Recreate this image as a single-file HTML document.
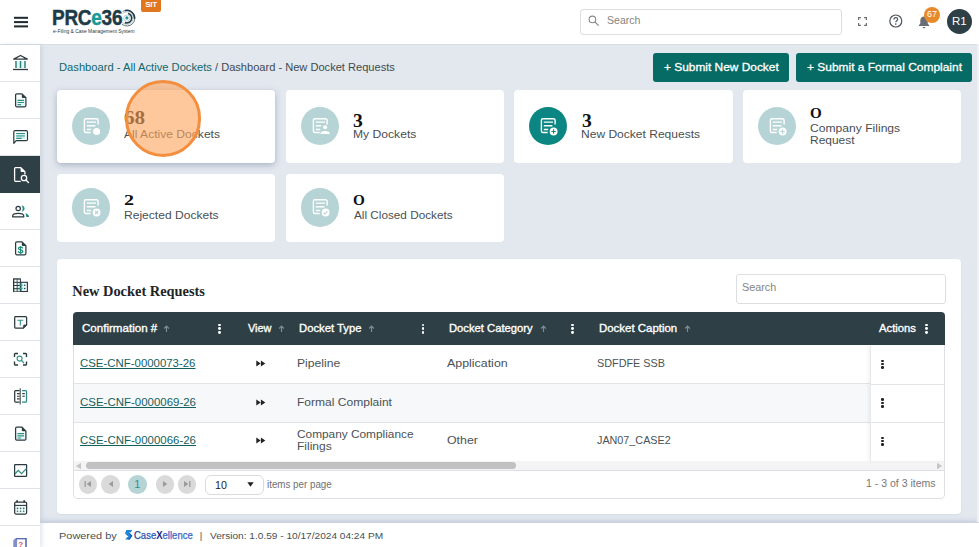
<!DOCTYPE html>
<html>
<head>
<meta charset="utf-8">
<title>PRCe360 - Dashboard - New Docket Requests</title>
<style>
*{box-sizing:border-box;margin:0;padding:0}
html,body{width:979px;height:547px;overflow:hidden;background:#e3e8ef;font-family:"Liberation Sans",sans-serif;color:#4a4f52}
.abs{position:absolute}
.t{position:absolute;white-space:nowrap;line-height:1em;transform-origin:0 50%;display:block}
#header{position:absolute;left:0;top:0;width:979px;height:44.5px;background:#fff;border-bottom:1px solid #d9dde3}
#sidebar{position:absolute;left:0;top:44.5px;width:40px;height:503px;background:#fff;box-shadow:2px 0 4px rgba(150,165,188,.28)}
.sb{position:absolute;left:0;width:40px;height:37px;border-bottom:1px solid #dfe2e6}
.sb.active{background:#2e3f46;border-bottom-color:#2e3f46}
.sb svg{position:absolute;left:10px;top:8px;width:20px;height:20px;overflow:visible}
#sit{position:absolute;left:141px;top:0;width:20px;height:11.5px;background:#e0761e;border-radius:0 0 2px 2px;color:#fff;font-size:8px;font-weight:bold;text-align:center;line-height:10.8px;letter-spacing:-.3px}
#hsearch{position:absolute;left:580px;top:9px;width:262px;height:25.5px;border:1px solid #dcdddf;border-radius:3px;background:#fff}
#badge{position:absolute;left:924px;top:7px;width:16px;height:16px;border-radius:50%;background:#e8892b;color:#fff;font-size:9px;text-align:center;line-height:15.5px}
#avatar{position:absolute;left:946.8px;top:9.1px;width:25px;height:25px;border-radius:50%;background:#2e3f46;color:#fff;font-size:11.5px;text-align:center;line-height:25px}
.btn{position:absolute;top:53px;height:28.5px;background:#066a65;border-radius:3px}
.card{position:absolute;width:218px;background:#fff;border-radius:4px}
.ic{position:absolute;width:38.4px;height:38.4px;border-radius:50%;background:#b6d4d6}
.ic.on{background:#0b8682}
.ic svg{position:absolute;left:9px;top:9px;width:20px;height:20px;overflow:visible}
#panel{position:absolute;left:57px;top:258.5px;width:904px;height:255.5px;background:#fff;border-radius:4px;box-shadow:0 1px 2px rgba(170,182,200,.25)}
#psearch{position:absolute;left:736px;top:274px;width:209.5px;height:29.5px;border:1px solid #dcdee1;border-radius:3px;background:#fff}
#grid{position:absolute;left:72.5px;top:311.5px;width:872.2px;height:187px;border-radius:4px;overflow:hidden;background:#fff}
#gborder{position:absolute;left:0;top:0;width:872.2px;height:187px;border:1px solid #dcdfe3;border-radius:4px}
#ghead{position:absolute;left:0;top:0;width:873px;height:33.5px;background:#2e3f46}
.row{position:absolute;left:1px;width:870.2px;border-bottom:1px solid #e2e4e7;background:#fff}
.row.alt{background:#f7f8fa}
#actcol{position:absolute;left:796px;top:34px;width:76px;height:115px;background:#fff;border-left:1px solid #e6e8ea;box-shadow:-2px 0 3px rgba(0,0,0,.05)}
.kd{position:absolute;width:2.8px}
.kd i{display:block;width:2.8px;height:2.8px;border-radius:50%;margin-bottom:.9px;background:#fff}
.kd.d i{width:2.4px;height:2.4px;margin-bottom:1.1px}
.kd.d i{background:#222}
.pg{position:absolute;top:164px;width:18.6px;height:18.6px;border-radius:50%;background:#dadada}
.pg svg{position:absolute;left:4.3px;top:4.3px;width:10px;height:10px}
#footer{position:absolute;left:40px;top:522.5px;width:939px;height:25px;background:#fff;box-shadow:0 -2px 5px rgba(150,165,188,.45)}
#hl{position:absolute;left:124.5px;top:80.2px;width:76.5px;height:76.5px;border-radius:50%;background:rgba(253,166,96,.62);border:3.6px solid #f38e3e}
</style>
</head>
<body>
<div id="header">
<svg class="abs" style="left:13px;top:15px" width="16" height="14" viewBox="0 0 16 14"><rect x="1" y="1.8" width="14" height="2" fill="#1f2a30"/><rect x="1" y="6.1" width="14" height="2" fill="#1f2a30"/><rect x="1" y="10.4" width="14" height="2" fill="#1f2a30"/></svg>
<svg class="abs" style="left:118px;top:8px" width="19" height="20" viewBox="0 0 19 20" fill="none"><path d="M4.71 3.40A7.9 7.9 0 1 1 4.04 16.33" stroke="#1c3b47" stroke-width=".7"/><path d="M6.91 2.66A7.7 7.7 0 0 1 16.57 10.77" stroke="#1c3b47" stroke-width="1.5"/><path d="M4.85 5.27A6.3 6.3 0 1 1 4.07 14.15" stroke="#7d9097" stroke-width=".5"/><path d="M10.14 5.46A4.8 4.8 0 1 1 6.87 14.45" stroke="#1c3b47" stroke-width="1.5"/><circle cx="8.900000000000006" cy="10.100000000000001" r="3.1" stroke="#8aa0a5" stroke-width=".5"/><circle cx="8.900000000000006" cy="9.900000000000002" r="1.6" fill="#1b9a94"/></svg>
<div id="sit">SIT</div>
<div id="hsearch"><svg class="abs" style="left:7px;top:4.8px" width="12" height="12" viewBox="0 0 12 12"><circle cx="4.4" cy="4.4" r="3.3" fill="none" stroke="#8a8a8a" stroke-width="1.1"/><path d="M6.9 6.9 L10.6 10.6" stroke="#8a8a8a" stroke-width="1.3"/></svg></div>
<svg class="abs" style="left:857px;top:16px" width="11" height="11" viewBox="0 0 11 11" fill="none" stroke="#6b7077" stroke-width="1.2"><path d="M1.600 3.900V1.600h2.300M7.100 1.600H9.400v2.300M9.400 7.100V9.400H7.100M3.900 9.400H1.600V7.100"/></svg>
<svg class="abs" style="left:888px;top:13px" width="16" height="16" viewBox="0 0 16 16"><circle cx="7.8" cy="8" r="6" fill="none" stroke="#4d535c" stroke-width="1.2"/><path d="M5.900 6.500c0-1.200.85-1.950 1.900-1.950s1.900.75 1.900 1.800c0 1.300-1.900 1.450-1.900 2.900" fill="none" stroke="#4d535c" stroke-width="1.200"/><circle cx="7.800" cy="11.100" r=".8" fill="#4d535c"/></svg>
<svg class="abs" style="left:918px;top:16px" width="12" height="13" viewBox="0 0 12 13"><path d="M6 .5c-2.300 0-3.700 1.800-3.700 4v3L.900 9.300v.700h10.200v-.700L9.700 7.500v-3c0-2.200-1.400-4-3.700-4z" fill="#696d75"/><path d="M4.700 10.900h2.600c0 .7-.6 1.300-1.300 1.300s-1.300-.6-1.300-1.300z" fill="#696d75"/></svg>
<div id="badge">67</div>
<div id="avatar">R1</div>
</div>

<div class="btn" style="left:653px;width:136px"></div>
<div class="btn" style="left:796px;width:176px"></div>
<div class="card" style="left:57px;top:90px;height:73px;width:218px;box-shadow:0 2px 6px rgba(110,125,150,.5)"><div class="ic" style="left:14.500px;top:17px;color:#b6d4d6"><svg viewBox="0 0 20 20"><path d="M17.100 8.600V4.300a1.500 1.500 0 0 0-1.500-1.500H4.900a1.500 1.500 0 0 0-1.500 1.500v10.700a1.500 1.500 0 0 0 1.500 1.500h4.800" fill="none" stroke="#fff" stroke-width="1.400" stroke-linecap="butt"/><path d="M5.800 6.100h9.200M5.800 9.800h8.600M5.800 13.500h4.400" stroke="#fff" stroke-width="1.400"/><circle cx="15.6" cy="15.5" r="3.500" fill="#fff"/></svg></div></div>
<div class="card" style="left:286px;top:90px;height:73px;width:218px"><div class="ic" style="left:14.500px;top:17px;color:#b6d4d6"><svg viewBox="0 0 20 20"><path d="M17.100 8.600V4.300a1.500 1.500 0 0 0-1.500-1.500H4.900a1.500 1.500 0 0 0-1.500 1.500v10.700a1.500 1.500 0 0 0 1.500 1.500h4.800" fill="none" stroke="#fff" stroke-width="1.400" stroke-linecap="butt"/><path d="M5.800 6.100h9.200M5.800 9.800h5.400M5.800 13.500h4.400" stroke="#fff" stroke-width="1.400"/><circle cx="15.100" cy="11.300" r="2" fill="#fff"/><path d="M10.500 17.900v-.500c0-1.600 2-2.400 4.600-2.400s4.600.8 4.600 2.400v.500z" fill="#fff"/></svg></div></div>
<div class="card" style="left:514.3px;top:90px;height:73px;width:218.6px"><div class="ic on" style="left:14.500px;top:17px;color:#0b8682"><svg viewBox="0 0 20 20"><path d="M17.100 8.600V4.300a1.500 1.500 0 0 0-1.500-1.500H4.900a1.500 1.500 0 0 0-1.500 1.500v10.700a1.500 1.500 0 0 0 1.500 1.500h4.800" fill="none" stroke="#fff" stroke-width="1.400" stroke-linecap="butt"/><path d="M5.800 6.100h9.200M5.800 9.800h8.600M5.800 13.500h4.400" stroke="#fff" stroke-width="1.400"/><circle cx="15.6" cy="15.5" r="3.900" fill="#fff"/><path d="M15.6 13.3v4.400M13.399999999999999 15.5h4.400" stroke="currentColor" stroke-width="1.100"/></svg></div></div>
<div class="card" style="left:743px;top:90px;height:73px;width:218px"><div class="ic" style="left:14.500px;top:17px;color:#b6d4d6"><svg viewBox="0 0 20 20"><path d="M17.100 8.600V4.300a1.500 1.500 0 0 0-1.500-1.500H4.900a1.500 1.500 0 0 0-1.500 1.500v10.700a1.500 1.500 0 0 0 1.500 1.500h4.800" fill="none" stroke="#fff" stroke-width="1.400" stroke-linecap="butt"/><path d="M5.800 6.100h9.200M5.800 9.800h8.600M5.800 13.500h4.400" stroke="#fff" stroke-width="1.400"/><circle cx="15.6" cy="15.5" r="3.900" fill="#fff"/><path d="M15.6 13.3v4.400M13.399999999999999 15.5h4.400" stroke="currentColor" stroke-width="1.100"/></svg></div></div>
<div class="card" style="left:57px;top:174.2px;height:67.6px;width:218px"><div class="ic" style="left:14.500px;top:14.1px;color:#b6d4d6"><svg viewBox="0 0 20 20"><path d="M17.100 8.600V4.300a1.500 1.500 0 0 0-1.500-1.500H4.900a1.500 1.500 0 0 0-1.500 1.500v10.700a1.500 1.500 0 0 0 1.500 1.500h4.800" fill="none" stroke="#fff" stroke-width="1.400" stroke-linecap="butt"/><path d="M5.800 6.100h9.200M5.800 9.800h8.600M5.800 13.500h4.400" stroke="#fff" stroke-width="1.400"/><circle cx="15.6" cy="15.5" r="3.900" fill="#fff"/><path d="M14.1 14.0l3 3M17.1 14.0l-3 3" stroke="currentColor" stroke-width="1.100"/></svg></div></div>
<div class="card" style="left:286px;top:174.2px;height:67.6px;width:218px"><div class="ic" style="left:14.500px;top:14.1px;color:#b6d4d6"><svg viewBox="0 0 20 20"><path d="M17.100 8.600V4.300a1.500 1.500 0 0 0-1.500-1.500H4.900a1.500 1.500 0 0 0-1.500 1.500v10.700a1.500 1.500 0 0 0 1.500 1.500h4.800" fill="none" stroke="#fff" stroke-width="1.400" stroke-linecap="butt"/><path d="M5.800 6.100h9.200M5.800 9.800h8.600M5.800 13.500h4.400" stroke="#fff" stroke-width="1.400"/><circle cx="15.6" cy="15.5" r="3.900" fill="#fff"/><path d="M13.7 15.6l1.300 1.300 2.500-2.600" stroke="currentColor" stroke-width="1.100" fill="none"/></svg></div></div>
<div id="panel"></div>
<div id="psearch"></div>
<div id="grid">
<div class="row" style="top:33.5px;height:38.8px"></div>
<div class="row alt" style="top:72.3px;height:38.8px"></div>
<div class="row" style="top:111.1px;height:37.9px;border-bottom:0"></div>
<div class="abs" style="left:1px;top:149.0px;width:870.2px;height:9.5px;background:#f4f4f4"></div>
<div class="abs" style="left:13.0px;top:150.5px;width:430px;height:6.5px;border-radius:3.5px;background:#c1c1c1"></div>
<svg class="abs" style="left:2.2px;top:150.3px" width="7" height="8" viewBox="0 0 7 8"><path d="M6 .8v6.400L.8 4z" fill="#c6c6c6"/></svg>
<svg class="abs" style="left:863.3px;top:150.3px" width="7" height="8" viewBox="0 0 7 8"><path d="M1 .8v6.400L6.200 4z" fill="#c6c6c6"/></svg>
<div id="actcol" style="left:797.0px;top:34.5px;height:114.5px;width:75.2px"><div class="abs" style="left:0;top:37.5px;width:76px;height:1px;background:#e2e4e7"></div><div class="abs" style="left:0;top:76px;width:76px;height:1px;background:#e2e4e7"></div></div>
<div class="abs" style="left:1px;top:158.0px;width:870.2px;height:1px;background:#dcdfe3"></div>
<div id="gborder"></div><div id="ghead"></div>
</div>
<div class="kd" style="left:218.1px;top:323.6px"><i></i><i></i><i></i></div>
<div class="kd" style="left:421.5px;top:323.6px"><i></i><i></i><i></i></div>
<div class="kd" style="left:571.1px;top:323.6px"><i></i><i></i><i></i></div>
<div class="kd" style="left:925.3000000000001px;top:323.6px"><i></i><i></i><i></i></div>
<div class="kd d" style="left:881.2px;top:359.5px"><i></i><i></i><i></i></div>
<div class="kd d" style="left:881.2px;top:398.3px"><i></i><i></i><i></i></div>
<div class="kd d" style="left:881.2px;top:436.5px"><i></i><i></i><i></i></div>
<svg class="abs" style="left:163.2px;top:325px" width="7" height="8" viewBox="0 0 7 8"><path d="M3.500 7V1.200M1.100 3.500L3.500 1.100 5.900 3.500" fill="none" stroke="#7f8d91" stroke-width="1.200"/></svg>
<svg class="abs" style="left:277.8px;top:325px" width="7" height="8" viewBox="0 0 7 8"><path d="M3.500 7V1.200M1.100 3.500L3.500 1.100 5.900 3.500" fill="none" stroke="#7f8d91" stroke-width="1.200"/></svg>
<svg class="abs" style="left:368.1px;top:325px" width="7" height="8" viewBox="0 0 7 8"><path d="M3.500 7V1.200M1.100 3.500L3.500 1.100 5.900 3.500" fill="none" stroke="#7f8d91" stroke-width="1.200"/></svg>
<svg class="abs" style="left:539.5px;top:325px" width="7" height="8" viewBox="0 0 7 8"><path d="M3.500 7V1.200M1.100 3.500L3.500 1.100 5.900 3.500" fill="none" stroke="#7f8d91" stroke-width="1.200"/></svg>
<svg class="abs" style="left:683.5px;top:325px" width="7" height="8" viewBox="0 0 7 8"><path d="M3.500 7V1.200M1.100 3.500L3.500 1.100 5.900 3.500" fill="none" stroke="#7f8d91" stroke-width="1.200"/></svg>
<svg class="abs" style="left:255.800px;top:360.1px" width="10" height="7" viewBox="0 0 10 7"><path d="M.3.500L4.700 3.500.3 6.500zM4.900.500L9.300 3.500 4.900 6.500z" fill="#222"/></svg>
<svg class="abs" style="left:255.800px;top:398.9px" width="10" height="7" viewBox="0 0 10 7"><path d="M.3.500L4.700 3.500.3 6.500zM4.900.500L9.300 3.500 4.900 6.500z" fill="#222"/></svg>
<svg class="abs" style="left:255.800px;top:437.2px" width="10" height="7" viewBox="0 0 10 7"><path d="M.3.500L4.700 3.500.3 6.500zM4.900.500L9.300 3.500 4.900 6.500z" fill="#222"/></svg>
<div class="pg" style="left:78.9px;top:475.2px;background:#dadada"><svg viewBox="0 0 10 10"><path d="M2.200 2v6" stroke="#9b9b9b" stroke-width="1.300"/><path d="M8 2v6L3.600 5z" fill="#9b9b9b"/></svg></div>
<div class="pg" style="left:101.3px;top:475.2px;background:#dadada"><svg viewBox="0 0 10 10"><path d="M7 2v6L2.800 5z" fill="#9b9b9b"/></svg></div>
<div class="pg" style="left:128.2px;top:475.2px;background:#b6d4d6"><svg viewBox="0 0 10 10"></svg></div>
<div class="pg" style="left:155.79999999999998px;top:475.2px;background:#dadada"><svg viewBox="0 0 10 10"><path d="M3 2v6L7.200 5z" fill="#9b9b9b"/></svg></div>
<div class="pg" style="left:177.89999999999998px;top:475.2px;background:#dadada"><svg viewBox="0 0 10 10"><path d="M7.800 2v6" stroke="#9b9b9b" stroke-width="1.300"/><path d="M2 2v6L6.400 5z" fill="#9b9b9b"/></svg></div>
<div class="abs" style="left:205px;top:475.200px;width:59px;height:19.800px;border:1px solid #d9dbdd;border-radius:6px;background:#fff"></div>
<svg class="abs" style="left:246.500px;top:482.300px" width="7" height="5" viewBox="0 0 7 5"><path d="M.3.300h6.400L3.500 4.700z" fill="#222"/></svg>
<div id="footer"></div>
<div id="sidebar"></div>
<div class="sb" style="top:44.5px"></div>
<div class="sb" style="top:81.5px"></div>
<div class="sb" style="top:118.5px"></div>
<div class="sb active" style="top:155.5px"></div>
<div class="sb" style="top:192.5px"></div>
<div class="sb" style="top:229.5px"></div>
<div class="sb" style="top:266.5px"></div>
<div class="sb" style="top:303.5px"></div>
<div class="sb" style="top:340.5px"></div>
<div class="sb" style="top:377.5px"></div>
<div class="sb" style="top:414.5px"></div>
<div class="sb" style="top:451.5px"></div>
<div class="sb" style="top:488.5px"></div>
<div class="sb" style="top:525.5px"></div>
<svg class="abs" style="left:0;top:0" width="40" height="547" viewBox="0 0 40 547" fill="none"><path d="M13.700 59.100L20.500 55.500l6.800 3.600z" stroke="#2b3a3f" stroke-width="1.300" stroke-linejoin="round"/><path d="M13 69.500h15" stroke="#2b3a3f" stroke-width="1.300"/><rect x="15.400" y="61" width="10.200" height="7" fill="#e6f7f5"/><path d="M16 61v7.100M20.500 61v7.100M25 61v7.100" stroke="#2d857c" stroke-width="1.500"/><rect x="16.300" y="99.2" width="9" height="7.400" fill="#e9f8f6"/><path d="M16.8 93.9h5.200l3.900 3.900v7.800a1.200 1.200 0 0 1-1.200 1.200h-7.900a1.200 1.200 0 0 1-1.200-1.200v-10.500a1.200 1.200 0 0 1 1.200-1.200z" fill="none" stroke="#2b3a3f" stroke-width="1.250" stroke-linejoin="round"/><path d="M21.8 93.9v3a1 1 0 0 0 1 1h3.100z" fill="#2b3a3f"/><path d="M17.500 100.4h6.500M17.500 102.5h6.500M17.500 104.7h3.600" stroke="#2f9288" stroke-width="1.200"/><rect x="16.200" y="132.800" width="8.800" height="6.200" fill="#d3efec"/><path d="M15 130.700h11.300a1.200 1.200 0 0 1 1.200 1.200v7.500a1.200 1.200 0 0 1-1.200 1.200h-10.100l-2.400 2.700v-11.400a1.200 1.200 0 0 1 1.200-1.200z" stroke="#2b3a3f" stroke-width="1.200" stroke-linejoin="round"/><path d="M16.200 133.500h8.700M16.200 138.400h5.500" stroke="#2f9288" stroke-width="1.100"/><path d="M16.200 135.900h8.700" stroke="#63b5ad" stroke-width="1.600"/><path d="M20.300 181.300h-4.700a1 1 0 0 1-1-1v-11.600a1 1 0 0 1 1-1h5.200l4.100 4.100v2.300" stroke="#fff" stroke-width="1.300" stroke-linejoin="round" stroke-linecap="round"/><path d="M20.600 167.700v3.300a.9.9 0 0 0 .9.900h3.400z" fill="#fff"/><circle cx="24" cy="178" r="2.700" stroke="#fff" stroke-width="1.300"/><path d="M26 180l2.400 2.400" stroke="#fff" stroke-width="1.400" stroke-linecap="round"/><circle cx="18.200" cy="208.500" r="2.200" stroke="#2b3a3f" stroke-width="1.200"/><path d="M12.600 216.800v-.700c0-1.800 2.700-2.800 5.600-2.800s5.600 1 5.600 2.800v.700z" stroke="#2b3a3f" stroke-width="1.200" stroke-linejoin="round"/><path d="M22.200 205.700a2.900 2.900 0 0 1 0 5.600a6 6 0 0 0 0-5.600z" fill="#1a8c7e" stroke="#1a8c7e" stroke-width=".5"/><path d="M25.200 213.300c2.200.500 3.700 1.500 3.700 3v.800h-2.700v-1c0-1.100-.4-2-1-2.800z" fill="#1a8c7e"/><path d="M16.8 241.9h5.200l3.900 3.900v7.800a1.200 1.200 0 0 1-1.200 1.200h-7.900a1.200 1.200 0 0 1-1.200-1.200v-10.500a1.200 1.200 0 0 1 1.200-1.200z" fill="none" stroke="#2b3a3f" stroke-width="1.250" stroke-linejoin="round"/><path d="M21.8 241.9v3a1 1 0 0 0 1 1h3.100z" fill="#2b3a3f"/><path d="M22.700 248.500c0-.9-.9-1.400-2.100-1.400s-2.100.5-2.100 1.400c0 1.900 4.300.9 4.300 2.800 0 .9-.9 1.500-2.200 1.500s-2.200-.6-2.200-1.500" stroke="#1a8c7e" stroke-width="1.250" fill="none"/><path d="M20.600 245.900v7.800" stroke="#1a8c7e" stroke-width="1.100"/><rect x="13" y="278.300" width="7.900" height="13.700" fill="#2b3a3f"/><rect x="14.3" y="279.6" width="2.4" height="2.200" fill="#fff"/><rect x="17.5" y="279.6" width="2.4" height="2.200" fill="#fff"/><rect x="14.3" y="282.8" width="2.4" height="2.200" fill="#fff"/><rect x="17.5" y="282.8" width="2.4" height="2.200" fill="#c4efe9"/><rect x="14.3" y="286.0" width="2.4" height="2.200" fill="#fff"/><rect x="17.5" y="286.0" width="2.4" height="2.200" fill="#c4efe9"/><rect x="14.3" y="289.2" width="2.4" height="2.200" fill="#dcf6f2"/><rect x="17.5" y="289.2" width="2.4" height="2.200" fill="#c4efe9"/><rect x="20.900" y="282.300" width="6.500" height="9.200" fill="#eafaf8" stroke="#2b3a3f" stroke-width="1.100"/><path d="M19.500 285.100h3.200M19.500 288.400h3.200" stroke="#1fa39b" stroke-width="1.200"/><circle cx="24.700" cy="285.200" r=".75" fill="#2b3a3f"/><circle cx="24.700" cy="288.500" r=".75" fill="#2b3a3f"/><path d="M15.500 316.600h10.300a.8.8 0 0 1 .8.8v7.500l-3.200 3.200h-7.900a.8.8 0 0 1-.8-.8v-9.900a.8.8 0 0 1 .8-.8z" stroke="#2b3a3f" stroke-width="1.250" stroke-linejoin="round"/><path d="M23.400 328.100v-2.400a.8.8 0 0 1 .8-.8h2.400z" fill="#2b3a3f" stroke="#2b3a3f" stroke-width=".6" stroke-linejoin="round"/><path d="M17.300 320.300h6M20.300 320.300v5.200" stroke="#2f9288" stroke-width="1.100"/><path d="M14.500 357v-2.800a.7.7 0 0 1 .7-.7h2.800M23 353.500h2.800a.7.7 0 0 1 .7.700v2.800M26.500 361.500v2.800a.7.7 0 0 1-.7.700h-2.800M18 365h-2.800a.7.7 0 0 1-.7-.7v-2.800" stroke="#2b3a3f" stroke-width="1.350"/><circle cx="19.600" cy="358.600" r="2.500" stroke="#2f9288" stroke-width="1.100"/><path d="M21.500 360.500l2.300 2.300" stroke="#2f9288" stroke-width="1.200" stroke-linecap="round"/><path d="M19.600 390.700h-4a.9.9 0 0 0-.9.900v9.600a.9.9 0 0 0 .9.900h4" stroke="#2b3a3f" stroke-width="1.250"/><path d="M20.200 388.200v16.400" stroke="#50595d" stroke-width="1.200"/><path d="M22 390.700h3.600a.9.9 0 0 1 .9.900v9.600a.9.9 0 0 1-.9.900h-3.600" stroke="#2c8a80" stroke-width="1.250"/><path d="M17 393.600h2.600M17 396.200h2.600M17 398.900h2.600" stroke="#2b3a3f" stroke-width="1.100"/><path d="M22.300 393.600h2.500M22.300 396.200h2.500" stroke="#2b3a3f" stroke-width="1.100"/><rect x="16.300" y="432.5" width="9" height="7.400" fill="#e9f8f6"/><path d="M16.8 427.2h5.200l3.900 3.900v7.800a1.200 1.200 0 0 1-1.200 1.200h-7.900a1.200 1.200 0 0 1-1.200-1.200v-10.500a1.200 1.200 0 0 1 1.200-1.200z" fill="none" stroke="#2b3a3f" stroke-width="1.250" stroke-linejoin="round"/><path d="M21.8 427.2v3a1 1 0 0 0 1 1h3.100z" fill="#2b3a3f"/><path d="M17.500 433.7h6.500M17.500 435.8h6.500M17.500 438.0h3.600" stroke="#2f9288" stroke-width="1.200"/><rect x="14.600" y="464.500" width="12" height="11.900" rx=".6" stroke="#2b3a3f" stroke-width="1.250"/><path d="M14.900 474l3.300-3.600 3.300 3.300 5.100-5.400" stroke="#2c8a80" stroke-width="1.200" stroke-linejoin="miter"/><rect x="16.200" y="506" width="9" height="7.500" fill="#eefaf8"/><rect x="14.700" y="502.100" width="11.900" height="11.900" rx="1.200" stroke="#2b3a3f" stroke-width="1.250"/><path d="M14.700 505.400h11.900" stroke="#2b3a3f" stroke-width="1.100"/><path d="M17.100 500.300v2M24.200 500.300v2" stroke="#2b3a3f" stroke-width="1.700"/><circle cx="17.5" cy="508.4" r=".8" fill="#2f6b64"/><circle cx="20.6" cy="508.4" r=".8" fill="#2f6b64"/><circle cx="23.7" cy="508.4" r=".8" fill="#2f6b64"/><circle cx="17.5" cy="511.3" r=".8" fill="#2f6b64"/><circle cx="20.6" cy="511.3" r=".8" fill="#2f6b64"/><circle cx="23.7" cy="511.3" r=".8" fill="#2f6b64"/><path d="M13.300 547v-6.800l2.600-2.200h10.800v9z" fill="#838fcb"/><path d="M15.900 538h10.800v1.400h-10.800z" fill="#5a69b4"/><path d="M25.100 539.400h1.600v7.600h-1.600z" fill="#6a75b0"/><path d="M17.100 539.400h8v7.600h-8z" fill="#fff"/><text x="20.800" y="546.800" font-family="Liberation Sans,sans-serif" font-size="8" font-weight="bold" fill="#cf5550" text-anchor="middle">?</text></svg>
<svg class="abs" style="left:124.6px;top:530.1px" width="8" height="10" viewBox="0 0 8 10"><path d="M1.300 0H7.400L5.500 2.600H4L7.400 5.800 4.700 9.500H.3L2.200 6.900H3.600L0 3.500Z" fill="#1e86d4"/><path d="M4 2.600L7.400 5.800 4.700 9.500H2.600L5.200 6Z" fill="#1565c0"/></svg>

<span class="t" id="t0" style="left:52.19px;top:7.57px;font-size:21.3px;font-weight:bold;color:#1c3b47;transform:scaleX(0.8919);letter-spacing:-.3px;-webkit-text-stroke:.45px currentColor;">PRC<span style="color:#1b9a94">e</span>36</span>
<span class="t" id="t1" style="left:53.05px;top:29.07px;font-size:5px;color:#1c3b47;transform:scaleX(0.9848);">e-Filing &amp; Case Management System</span>
<span class="t" id="t2" style="left:607.09px;top:15.50px;font-size:10.4px;color:#858585;transform:scaleX(1.0142);">Search</span>
<span class="t" id="t3" style="left:58.82px;top:62.16px;font-size:10.8px;color:#12676a;transform:scaleX(1.0362);">Dashboard - All Active Dockets</span>
<span class="t" id="t4" style="left:215.00px;top:62.16px;font-size:10.8px;color:#3f4a4e;transform:scaleX(1.0260);">/ Dashboard - New Docket Requests</span>
<span class="t" id="t5" style="left:663.89px;top:61.48px;font-size:11.6px;color:#fff;transform:scaleX(1.0260);-webkit-text-stroke:.3px currentColor;">+ Submit New Docket</span>
<span class="t" id="t6" style="left:806.78px;top:61.48px;font-size:11.6px;color:#fff;transform:scaleX(1.0300);-webkit-text-stroke:.3px currentColor;">+ Submit a Formal Complaint</span>
<span class="t" id="t7" style="left:123.72px;top:108.97px;font-size:18.3px;font-weight:bold;color:#111;font-family:'Liberation Serif',serif;transform:scaleX(1.1594);">68</span>
<span class="t" id="t8" style="left:124.30px;top:128.73px;font-size:11.3px;transform:scaleX(1.0693);">All Active Dockets</span>
<span class="t" id="t9" style="left:353.02px;top:112.47px;font-size:18.9px;font-weight:bold;color:#111;font-family:'Liberation Serif',serif;transform:scaleX(1.0375);">3</span>
<span class="t" id="t10" style="left:352.63px;top:128.73px;font-size:11.3px;transform:scaleX(1.0736);">My Dockets</span>
<span class="t" id="t11" style="left:581.82px;top:112.47px;font-size:18.9px;font-weight:bold;color:#111;font-family:'Liberation Serif',serif;transform:scaleX(1.0375);">3</span>
<span class="t" id="t12" style="left:581.33px;top:128.73px;font-size:11.3px;transform:scaleX(1.0652);">New Docket Requests</span>
<span class="t" id="t13" style="left:810.32px;top:106.24px;font-size:14.4px;font-weight:bold;color:#111;font-family:'Liberation Serif',serif;transform:scaleX(1.0462);">O</span>
<span class="t" id="t14" style="left:810.26px;top:122.73px;font-size:11.3px;transform:scaleX(1.0715);">Company Filings</span>
<span class="t" id="t15" style="left:809.74px;top:134.73px;font-size:11.3px;transform:scaleX(1.0585);">Request</span>
<span class="t" id="t16" style="left:124.20px;top:193.32px;font-size:14.3px;font-weight:bold;color:#111;font-family:'Liberation Serif',serif;transform:scaleX(1.4000);">2</span>
<span class="t" id="t17" style="left:123.63px;top:209.73px;font-size:11.3px;transform:scaleX(1.0682);">Rejected Dockets</span>
<span class="t" id="t18" style="left:353.22px;top:193.07px;font-size:14.6px;font-weight:bold;color:#111;font-family:'Liberation Serif',serif;transform:scaleX(1.0400);">O</span>
<span class="t" id="t19" style="left:353.70px;top:209.73px;font-size:11.3px;transform:scaleX(1.0402);">All Closed Dockets</span>
<span class="t" id="t20" style="left:72.25px;top:284.24px;font-size:14.4px;font-weight:bold;color:#1e2528;font-family:'Liberation Serif',serif;">New Docket Requests</span>
<span class="t" id="t21" style="left:742.48px;top:282.50px;font-size:10.4px;color:#858585;transform:scaleX(1.0394);">Search</span>
<span class="t" id="t22" style="left:82.43px;top:323.33px;font-size:10.6px;color:#fff;transform:scaleX(1.0924);-webkit-text-stroke:.32px currentColor;">Confirmation #</span>
<span class="t" id="t23" style="left:247.86px;top:323.33px;font-size:10.6px;color:#fff;transform:scaleX(1.0280);-webkit-text-stroke:.32px currentColor;">View</span>
<span class="t" id="t24" style="left:299.20px;top:323.33px;font-size:10.6px;color:#fff;transform:scaleX(1.0649);-webkit-text-stroke:.32px currentColor;">Docket Type</span>
<span class="t" id="t25" style="left:449.01px;top:323.33px;font-size:10.6px;color:#fff;transform:scaleX(1.0599);-webkit-text-stroke:.32px currentColor;">Docket Category</span>
<span class="t" id="t26" style="left:599.19px;top:323.33px;font-size:10.6px;color:#fff;transform:scaleX(1.0793);-webkit-text-stroke:.32px currentColor;">Docket Caption</span>
<span class="t" id="t27" style="left:879.27px;top:323.33px;font-size:10.6px;color:#fff;transform:scaleX(1.0647);-webkit-text-stroke:.32px currentColor;">Actions</span>
<span class="t" id="t28" style="left:79.50px;top:358.16px;font-size:10.8px;color:#145f60;transform:scaleX(1.0572);text-decoration:underline;text-underline-offset:.6px;text-decoration-thickness:1px;">CSE-CNF-0000073-26</span>
<span class="t" id="t29" style="left:79.50px;top:397.16px;font-size:10.8px;color:#145f60;transform:scaleX(1.0618);text-decoration:underline;text-underline-offset:.6px;text-decoration-thickness:1px;">CSE-CNF-0000069-26</span>
<span class="t" id="t30" style="left:79.50px;top:435.16px;font-size:10.8px;color:#145f60;transform:scaleX(1.0618);text-decoration:underline;text-underline-offset:.6px;text-decoration-thickness:1px;">CSE-CNF-0000066-26</span>
<span class="t" id="t31" style="left:296.94px;top:358.33px;font-size:10.6px;color:#4b5255;transform:scaleX(1.1479);">Pipeline</span>
<span class="t" id="t32" style="left:296.95px;top:397.33px;font-size:10.6px;color:#4b5255;transform:scaleX(1.1360);">Formal Complaint</span>
<span class="t" id="t33" style="left:297.24px;top:429.33px;font-size:10.6px;color:#4b5255;transform:scaleX(1.1177);">Company Compliance</span>
<span class="t" id="t34" style="left:296.95px;top:441.33px;font-size:10.6px;color:#4b5255;transform:scaleX(1.1356);">Filings</span>
<span class="t" id="t35" style="left:447.30px;top:358.33px;font-size:10.6px;color:#4b5255;transform:scaleX(1.1707);">Application</span>
<span class="t" id="t36" style="left:446.72px;top:435.33px;font-size:10.6px;color:#4b5255;transform:scaleX(1.1650);">Other</span>
<span class="t" id="t37" style="left:596.99px;top:358.33px;font-size:10.6px;color:#4b5255;transform:scaleX(1.0229);">SDFDFE SSB</span>
<span class="t" id="t38" style="left:597.25px;top:435.33px;font-size:10.6px;color:#4b5255;transform:scaleX(1.0174);">JAN07_CASE2</span>
<span class="t" id="t39" style="left:134.25px;top:478.99px;font-size:11px;color:#2f918d;">1</span>
<span class="t" id="t40" style="left:214.94px;top:480.41px;font-size:10.5px;color:#222;transform:scaleX(1.0190);">10</span>
<span class="t" id="t41" style="left:266.87px;top:479.84px;font-size:10px;color:#6f6f6f;transform:scaleX(0.9785);">items per page</span>
<span class="t" id="t42" style="left:866.13px;top:478.58px;font-size:10.3px;color:#777;transform:scaleX(1.0209);">1 - 3 of 3 items</span>
<span class="t" id="t43" style="left:58.65px;top:531.17px;font-size:9.6px;transform:scaleX(1.1400);">Powered by</span>
<span class="t" id="t44" style="left:133.83px;top:530.67px;font-size:10.2px;color:#2c58b3;transform:scaleX(0.9339);-webkit-text-stroke:.25px currentColor;"><span style="color:#1f4296">C</span>ase<span style="color:#0f2c86;font-weight:bold;-webkit-text-stroke:0">X</span><span style="color:#3a66c2">ellence</span></span>
<span class="t" id="t45" style="left:199.80px;top:531.17px;font-size:9.6px;">|</span>
<span class="t" id="t46" style="left:209.74px;top:531.17px;font-size:9.6px;transform:scaleX(1.0536);">Version: 1.0.59 - 10/17/2024 04:24 PM</span>
<div id="hl"></div>
<div class="abs" style="left:977px;top:44px;width:2px;height:478px;background:#eef1f5"></div>
</body>
</html>
